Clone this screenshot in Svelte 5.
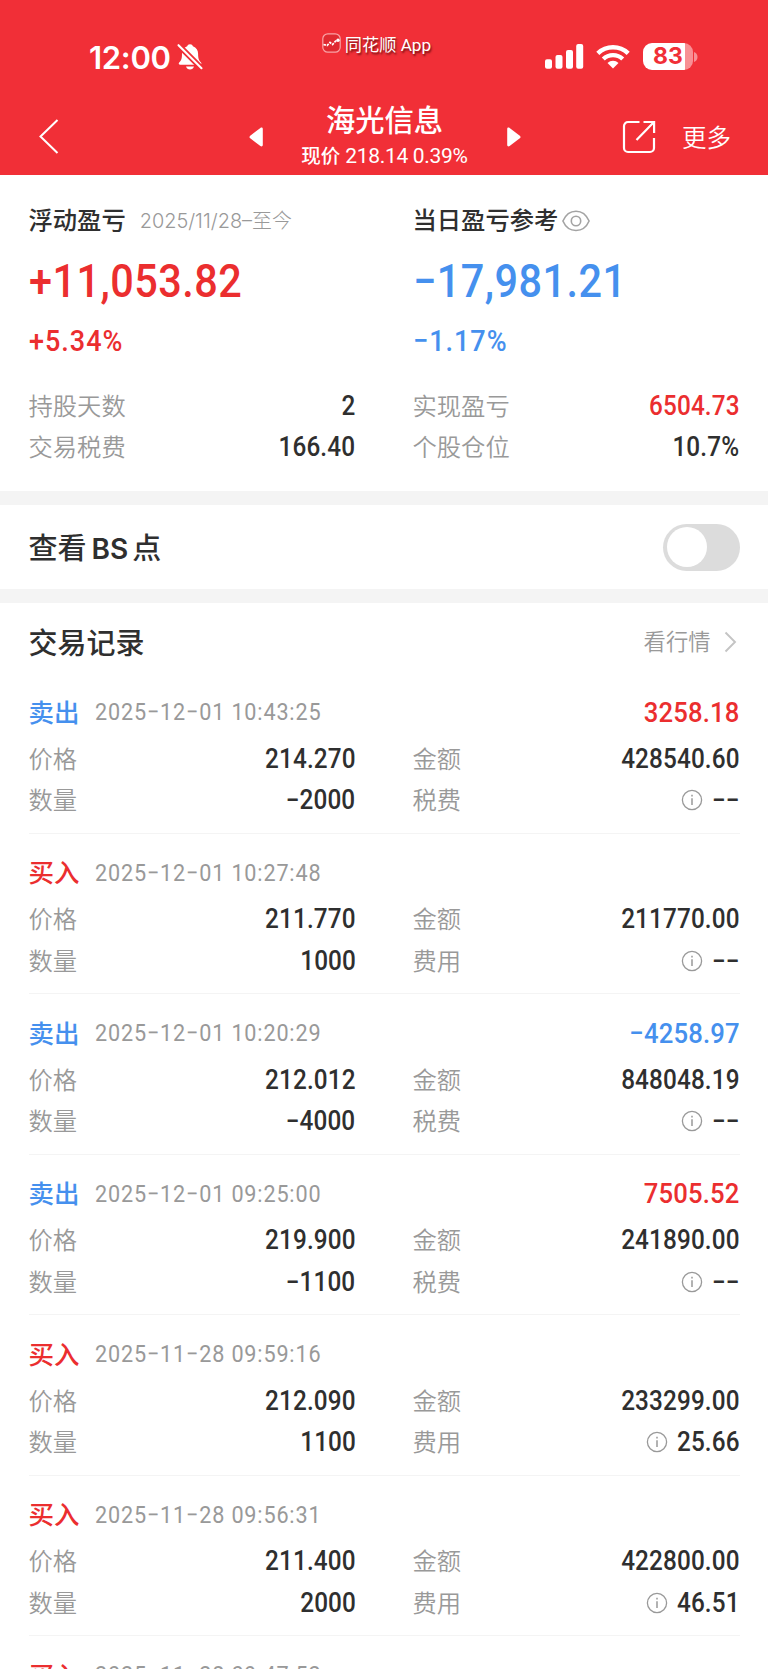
<script>
  let showPoints = $state(false);

  const NONE = '−−';

  const records = [
    { side: 'sell', time: '2025−12−01 10:43:25', profit: '3258.18', price: '214.270', amount: '428540.60', qty: '−2000', fee: NONE },
    { side: 'buy', time: '2025−12−01 10:27:48', profit: '', price: '211.770', amount: '211770.00', qty: '1000', fee: NONE },
    { side: 'sell', time: '2025−12−01 10:20:29', profit: '−4258.97', price: '212.012', amount: '848048.19', qty: '−4000', fee: NONE },
    { side: 'sell', time: '2025−12−01 09:25:00', profit: '7505.52', price: '219.900', amount: '241890.00', qty: '−1100', fee: NONE },
    { side: 'buy', time: '2025−11−28 09:59:16', profit: '', price: '212.090', amount: '233299.00', qty: '1100', fee: '25.66' },
    { side: 'buy', time: '2025−11−28 09:56:31', profit: '', price: '211.400', amount: '422800.00', qty: '2000', fee: '46.51' },
    { side: 'buy', time: '2025−11−28 09:47:52', profit: '', price: '', amount: '', qty: '', fee: '' }
  ];

  const isLoss = (/** @type {string} */ v) => v.startsWith('−');
</script>

<div class="page">
  <header>
    <div class="status">
      <div class="clock">
        <span>12:00</span>
        <svg width="26" height="28" viewBox="0 0 26 28">
          <path d="M13 1.2c1.6 0 2.6.9 2.9 2 3.500 1.200 5.200 4 5.200 7.500 0 5.300 1 6.500 2.900 8.800.9 1.200.2 2.300-1 2.300H3.200c-1.300 0-2-1.200-1-2.300 2-2.300 2.800-3.500 2.800-8.800 0-3.500 1.700-6.300 5.200-7.500.3-1.100 1.300-2 2.800-2z" fill="#fff" />
          <path d="M9 23.500h8c-.6 1.900-2 3-4 3s-3.400-1.100-4-3z" fill="#fff" />
          <path d="M1.200 1.900 25 25.700" stroke="#f12f37" stroke-width="5.600" />
          <path d="m1.500 2.200 23 23" stroke="#fff" stroke-width="2.100" stroke-linecap="round" />
        </svg>
      </div>
      <div class="app-tag">
        <svg width="19" height="20" viewBox="0 0 19 20">
          <rect x=".8" y=".8" width="17.400" height="18.400" rx="5" fill="#e02a31" stroke="#f9a3a6" stroke-width="1.200" />
          <path d="m1.500 11.500 3.500 1 3-3 2.500 2 3-3.300 2.500-1" fill="none" stroke="#fff" stroke-width="1.700" stroke-dasharray="2.500 1" />
          <circle cx="16" cy="7.300" r="1.700" fill="#fff" />
        </svg>
        <span>同花顺 App</span>
      </div>
      <div class="signals">
        <svg width="39" height="25" viewBox="0 0 39 25" fill="#fff">
          <rect x="0" y="15.300" width="7" height="9.500" rx="2" />
          <rect x="10.500" y="11" width="7" height="13.800" rx="2" />
          <rect x="21" y="6" width="7" height="18.800" rx="2" />
          <rect x="31.200" y="0" width="7" height="24.800" rx="2" />
        </svg>
        <svg class="wifi" width="34" height="25" viewBox="0 0 34 25" fill="none" stroke="#fff" stroke-width="4.400">
          <path d="M1.800 9.300a22 22 0 0 1 30.400 0" />
          <path d="M7.300 15a14 14 0 0 1 19.400 0" />
          <path d="M17 24.500 11.500 19a8 8 0 0 1 11 0z" fill="#fff" stroke="none" />
        </svg>
        <div class="battery"><span>83</span></div>
        <svg width="4" height="10" viewBox="0 0 4 10"><path d="M0 0c2 .8 3.500 2.500 3.500 5S2 9.200 0 10z" fill="#f88f94" /></svg>
      </div>
    </div>
    <nav>
      <svg class="back" width="22" height="38" viewBox="0 0 22 38"><path d="M19.500 2 2.500 18.500 19.500 35" fill="none" stroke="#fff" stroke-width="2" /></svg>
      <div class="stock">
        <svg width="15" height="20" viewBox="0 0 15 20"><path d="M13.800 2v16c0 1.300-1.300 1.800-2.400 1L1.200 11.300c-1-.8-1-1.800 0-2.600L11.400 1c1.100-.8 2.400-.3 2.400 1z" fill="#fff" /></svg>
        <div class="stock-title">
          <h1>海光信息</h1>
          <p>现价 <b>218.14 0.39%</b></p>
        </div>
        <svg width="15" height="20" viewBox="0 0 15 20"><path d="M1.200 2v16c0 1.300 1.300 1.800 2.400 1l10.200-7.700c1-.8 1-1.800 0-2.600L3.600 1C2.500.2 1.200.7 1.200 2z" fill="#fff" /></svg>
      </div>
      <div class="actions">
        <svg width="34" height="34" viewBox="0 0 34 34" fill="none" stroke="#fff" stroke-width="2.200">
          <path d="M17.500 2H6a4 4 0 0 0-4 4v22a4 4 0 0 0 4 4h22a4 4 0 0 0 4-4V18" />
          <path d="M21.500 2h10.600v11M31.500 2.500 14.500 20" />
        </svg>
        <span>更多</span>
      </div>
    </nav>
  </header>

  <section class="summary grid">
    <div>
      <h2>浮动盈亏 <small>2025/11/28–至今</small></h2>
      <p class="big up">+11,053.82</p>
      <p class="pct up">+5.34%</p>
      <div class="row"><span>持股天数</span><b>2</b></div>
      <div class="row"><span>交易税费</span><b>166.40</b></div>
    </div>
    <div>
      <h2>
        当日盈亏参考
        <svg width="28" height="22" viewBox="0 0 28 22" fill="none" stroke="#a3a3a3" stroke-width="1.600">
          <path d="M.9 11C3.500 5 8 1.200 14 1.200S24.500 5 27.100 11C24.500 17 20 20.500 14 20.500S3.500 17 .9 11z" />
          <circle cx="14" cy="11" r="4.700" />
        </svg>
      </h2>
      <p class="big down">−17,981.21</p>
      <p class="pct down">−1.17%</p>
      <div class="row"><span>实现盈亏</span><b class="up">6504.73</b></div>
      <div class="row"><span>个股仓位</span><b>10.7%</b></div>
    </div>
  </section>

  <section class="points">
    <h3>查看<i>BS</i>点</h3>
    <button class="toggle" class:on={showPoints} onclick={() => (showPoints = !showPoints)} aria-label="查看BS点"></button>
  </section>

  <section class="records">
    <div class="records-head">
      <h3>交易记录</h3>
      <a href="#quote">
        <span>看行情</span>
        <svg width="13" height="22" viewBox="0 0 13 22"><path d="m1.500 1.500 9.500 9.500-9.500 9.500" fill="none" stroke="#c4c4c4" stroke-width="1.900" /></svg>
      </a>
    </div>
    {#each records as r}
      <article>
        <div class="record-top">
          <strong class={r.side === 'sell' ? 'down' : 'up'}>{r.side === 'sell' ? '卖出' : '买入'}</strong>
          <time>{r.time}</time>
          <em class={isLoss(r.profit) ? 'down' : 'up'}>{r.profit}</em>
        </div>
        {#if r.price}
          <div class="grid">
            <div class="row"><span>价格</span><b>{r.price}</b></div>
            <div class="row"><span>金额</span><b>{r.amount}</b></div>
            <div class="row"><span>数量</span><b>{r.qty}</b></div>
            <div class="row">
              <span>{r.side === 'sell' ? '税费' : '费用'}</span>
              <svg class="info" class:empty={r.fee === NONE} width="22" height="22" viewBox="0 0 22 22">
                <circle cx="11" cy="11" r="9.600" fill="none" stroke="#999" stroke-width="1.300" />
                <path d="M11 9.300v6.700M11 5.800v1.800" stroke="#999" stroke-width="1.500" />
              </svg>
              <b>{r.fee}</b>
            </div>
          </div>
        {/if}
      </article>
    {/each}
  </section>
</div>

<style>
  :global(body) {
    margin: 0;
    background: #fff;
  }
  .page {
    height: 1669px;
    overflow: hidden;
    display: flex;
    flex-direction: column;
    font-family: Roboto, "Noto Sans CJK SC", sans-serif;
    color: #2f2f2f;
  }
  h1, h2, h3, p {
    margin: 0;
    font-weight: 500;
  }
  svg {
    display: block;
    flex: none;
  }
  .up { color: #eb2e2f; }
  .down { color: #4590ee; }

  header {
    flex: none;
    height: 175px;
    background: #f12f37;
    color: #fff;
  }
  .status {
    height: 98px;
    display: grid;
    grid-template-columns: 1fr auto 1fr;
    box-sizing: border-box;
    padding: 0 70px 0 89px;
  }
  .clock {
    display: flex;
    align-items: center;
    gap: 6px;
    height: 114px;
    font: 600 31px Inter, sans-serif;
    letter-spacing: -0.300px;
  }
  .app-tag {
    display: flex;
    align-items: center;
    gap: 4px;
    height: 86px;
    margin-right: 34px;
    font-size: 17.200px;
    text-shadow: 1px 2px 2px rgba(60, 0, 0, 0.7);
  }
  .signals {
    display: flex;
    align-items: center;
    justify-content: flex-end;
    height: 113px;
  }
  .wifi { margin: 0 13px 0 12px; }
  .battery {
    width: 50px;
    height: 27px;
    border-radius: 9px;
    margin-right: 1px;
    background: linear-gradient(90deg, #fff 83%, #f88f94 83%);
    color: #f12f37;
    font: 700 23px/27px Inter, sans-serif;
    text-align: center;
  }
  nav {
    height: 77px;
    display: grid;
    grid-template-columns: 1fr auto 1fr;
    align-items: center;
    padding: 0 37px 0 38px;
  }
  .stock {
    display: flex;
    align-items: center;
    gap: 31px;
  }
  .stock-title {
    width: 180px;
    padding-bottom: 4px;
    text-align: center;
    white-space: nowrap;
  }
  h1 {
    font-size: 29.300px;
    line-height: 44px;
  }
  .stock-title p {
    font-size: 19.500px;
    line-height: 26px;
  }
  .stock-title b {
    font-weight: 400;
    font-size: 21px;
    letter-spacing: -0.300px;
  }
  .actions {
    display: flex;
    align-items: center;
    justify-content: flex-end;
    gap: 26px;
    font-size: 24.500px;
    font-weight: 350;
  }
  .actions span { padding-bottom: 1px; }

  .grid {
    display: grid;
    grid-template-columns: 1fr 1fr;
    column-gap: 57px;
  }
  .summary {
    flex: none;
    height: 292px;
    padding: 24px 28.500px 0;
    border-bottom: 14px solid #f4f4f4;
  }
  h2 {
    display: flex;
    align-items: center;
    font-size: 24.300px;
    line-height: 44px;
  }
  h2 small {
    margin-left: 14px;
    padding-bottom: 3px;
    font: 300 19.900px Inter, "Noto Sans CJK SC", sans-serif;
    color: #999;
  }
  h2 svg { margin-left: 4px; }

  /* figures are drawn slightly condensed */
  .big, .pct, time {
    transform: scaleX(0.9);
    transform-origin: left;
  }
  .row b, em {
    transform: scaleX(0.9);
    transform-origin: right;
  }
  .big {
    font-size: 46px;
    line-height: 76px;
    letter-spacing: 0.540px;
  }
  .pct {
    font-size: 30px;
    line-height: 44px;
    letter-spacing: 1.100px;
    margin-bottom: 22px;
  }
  .row {
    display: flex;
    align-items: center;
    height: 41.500px;
    font-size: 24.300px;
  }
  .row span {
    color: #999;
    margin-right: auto;
    padding-bottom: 3px;
    font-weight: 350;
  }
  .row b {
    font-size: 27px;
    font-weight: 500;
    letter-spacing: 0.150px;
  }
  .info { margin-right: 2px; }
  .info.empty { margin-right: 6px; }

  .points {
    flex: none;
    height: 84px;
    display: flex;
    align-items: center;
    justify-content: space-between;
    padding: 0 28px 0 28.500px;
    border-bottom: 14px solid #f4f4f4;
  }
  h3 {
    font-size: 29px;
    padding-bottom: 2px;
  }
  h3 i {
    font: 600 28px Inter, sans-serif;
    margin: 0 4px 0 5px;
  }
  .toggle {
    width: 77px;
    height: 47px;
    border: 0;
    border-radius: 24px;
    padding: 3.500px;
    background: #dcdcdc;
  }
  .toggle::before {
    content: '';
    display: block;
    width: 40px;
    height: 40px;
    border-radius: 50%;
    background: #fff;
  }
  .toggle.on { background: #eb2e2f; }
  .toggle.on::before { margin-left: auto; }

  .records { padding: 0 28.500px; }
  .records-head {
    display: flex;
    align-items: center;
    justify-content: space-between;
    box-sizing: border-box;
    height: 70px;
    padding-top: 7px;
  }
  .records-head a {
    display: flex;
    align-items: center;
    gap: 13px;
    margin-right: 3px;
    color: #999;
    text-decoration: none;
    font-size: 22.300px;
    font-weight: 350;
  }
  .records-head span { padding-bottom: 3px; }
  article {
    height: 160.560px;
    box-sizing: border-box;
    padding-top: 14px;
    border-bottom: 1px solid #f4f4f4;
  }
  .record-top {
    display: flex;
    align-items: center;
    height: 50px;
    margin-bottom: 1px;
  }
  .record-top strong {
    padding-bottom: 4px;
    font-size: 25.500px;
    font-weight: 500;
  }
  time {
    margin: 0 auto 0 15px;
    font-size: 24px;
    color: #999;
    letter-spacing: 0.930px;
  }
  em {
    font-style: normal;
    font-weight: 500;
    font-size: 28.500px;
    letter-spacing: 0.200px;
  }
</style>
